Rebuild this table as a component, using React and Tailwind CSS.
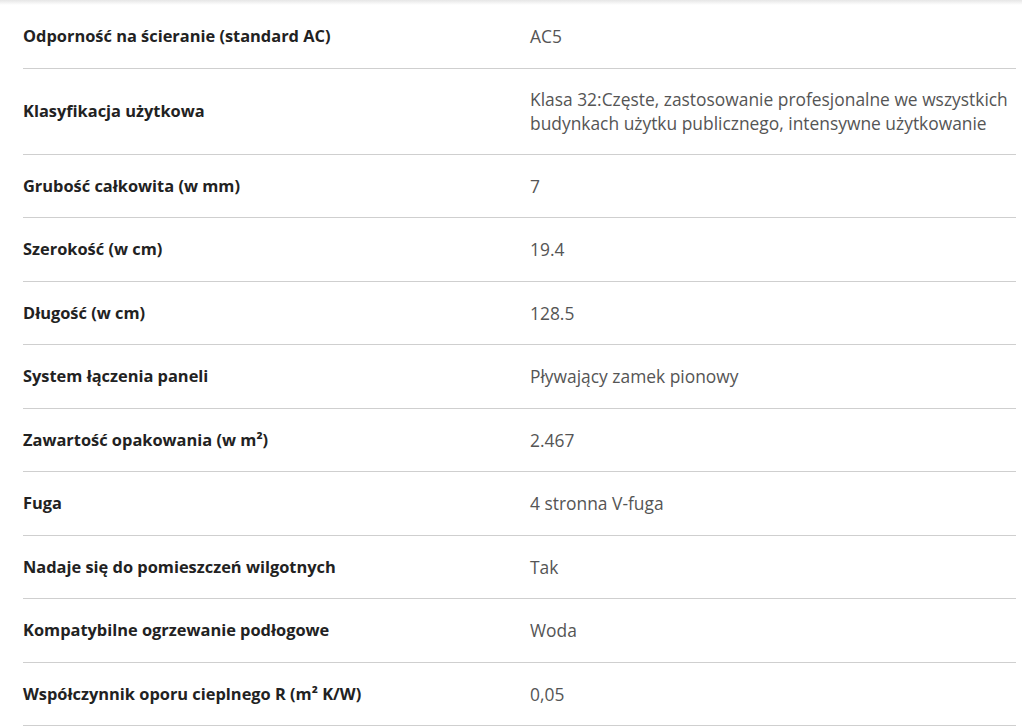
const rows = [
  ['Odporność na ścieranie (standard AC)', 'AC5'],
  ['Klasyfikacja użytkowa', 'Klasa 32:Częste, zastosowanie profesjonalne we wszystkich budynkach użytku publicznego, intensywne użytkowanie'],
  ['Grubość całkowita (w mm)', '7'],
  ['Szerokość (w cm)', '19.4'],
  ['Długość (w cm)', '128.5'],
  ['System łączenia paneli', 'Pływający zamek pionowy'],
  ['Zawartość opakowania (w m²)', '2.467'],
  ['Fuga', '4 stronna V-fuga'],
  ['Nadaje się do pomieszczeń wilgotnych', 'Tak'],
  ['Kompatybilne ogrzewanie podłogowe', 'Woda'],
  ['Współczynnik oporu cieplnego R (m² K/W)', '0,05'],
];

function SpecRow({ label, value }) {
  return (
    <div className="flex items-center min-h-[63.5px] py-[18.5px] border-b border-[#cfcfcf]">
      <div className="w-[507px] shrink-0 font-bold text-[16.4px] text-[#222222]">{label}</div>
      <div className="flex-1 text-[17.4px] text-[#555555]">{value}</div>
    </div>
  );
}

export default function App() {
  return (
    <div className="min-h-screen bg-white font-['Open_Sans',sans-serif] leading-6">
      <div className="h-[5px] bg-gradient-to-b from-[#e6e6e6] to-white" />
      <div className="ml-[23px] mr-[6px]">
        {rows.map(([label, value]) => (
          <SpecRow key={label} label={label} value={value} />
        ))}
      </div>
    </div>
  );
}
